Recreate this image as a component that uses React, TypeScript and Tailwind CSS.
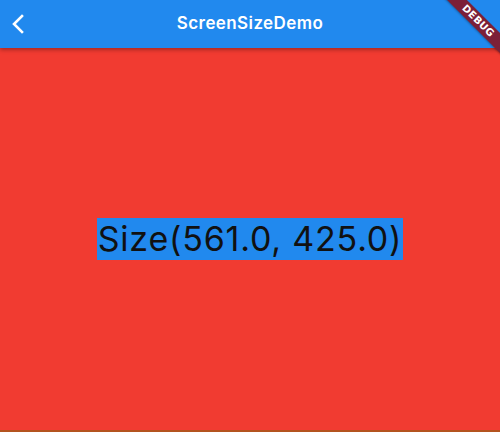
export default function App() {
  return (
    <div className="relative w-[500px] h-[432px] overflow-hidden flex flex-col bg-[#f13b31] font-['Inter','Roboto',sans-serif]">
      <header className="relative z-10 h-[48px] shrink-0 bg-[#2189ee] flex items-center shadow-[0_2px_4px_rgba(0,0,0,0.3)]">
        <div className="w-[48px] h-full flex items-center pl-[11px]">
          <svg width="14" height="20" viewBox="0 0 14 20" fill="none">
            <path d="M11 2 L3 10 L11 18" stroke="white" strokeWidth="2.6" strokeLinecap="square" />
          </svg>
        </div>
        <h1 className="flex-1 text-center pr-[48px] text-white text-[17px] font-semibold tracking-[0.4px]">
          ScreenSizeDemo
        </h1>
      </header>

      <main className="flex-1 flex items-center justify-center">
        <span className="bg-[#2189ee] text-[#111] text-[34px] leading-[42px] tracking-[0.8px] px-[1px]">
          Size(561.0, 425.0)
        </span>
      </main>
      <div className="h-[2px] bg-[#b4541f]" />

      {/* debug banner */}
      <div className="absolute z-20 top-[14px] right-[-38px] w-[120px] h-[14px] rotate-45 bg-[#7c2038] flex items-center justify-center shadow-[0_1px_2px_rgba(0,0,0,0.3)]">
        <span className="text-white text-[10px] font-black leading-none tracking-[0.3px] font-['DejaVu_Sans',sans-serif]">DEBUG</span>
      </div>
    </div>
  )
}
